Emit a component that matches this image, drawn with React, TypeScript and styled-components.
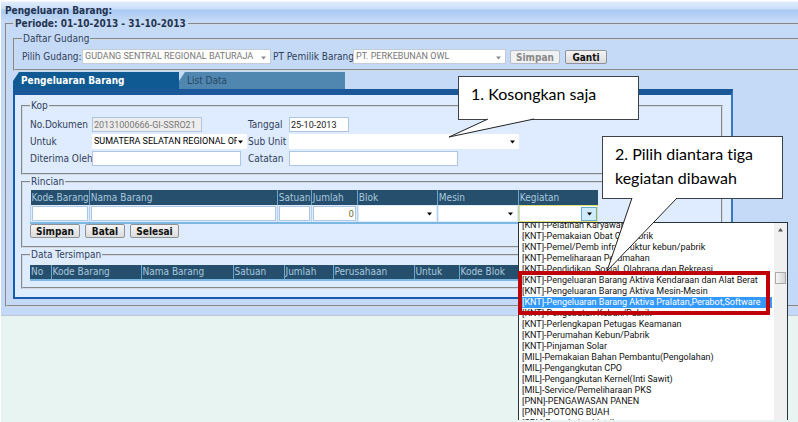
import React from "react";
import styled, { createGlobalStyle, css } from "styled-components";

const ui = `"DejaVu Sans Condensed", "DejaVu Sans", sans-serif`;
const field = `Roboto, "Liberation Sans", Arial, sans-serif`;

const GlobalStyle = createGlobalStyle`
  * { box-sizing: border-box; }
  body { margin: 0; background: #e7f4f2; font: 10px/12px ${ui}; color: #30415a; overflow: hidden; }
  button, input, select { font: inherit; margin: 0; }
`;

const Page = styled.main`
  position: relative;
  min-height: 100vh;
  border-left: 1px solid #fff;
  overflow: hidden;
`;

const Window = styled.section`
  display: flow-root;
  padding: 4px 0 8px 4px;
  background: linear-gradient(#fff 0 1px, #dfecfd 2px, #c8def9 9px, #a9c9f3 10px, #c5daf7 21px, #c3d9f7 100%);
  border-bottom: 1px solid #b9c8d8;
`;

const Title = styled.h1`
  margin: 0;
  height: 13px;
  font: bold 10px/13px ${ui};
  color: #24344f;
`;

const Group = styled.fieldset<{ $open?: boolean; $top?: number; $bottom?: number }>`
  min-width: 0;
  margin: 0;
  padding: ${(p) => p.$top ?? 5}px 7px ${(p) => p.$bottom ?? 7}px;
  border: 2px groove #d3d9e0;
  ${(p) => p.$open && "border-right: 0; padding-right: 0;"}
  legend {
    padding: 0 1px;
    height: 12px;
    font-size: 10px;
    line-height: 12px;
  }
`;

const Period = styled(Group)`
  padding-left: 6px;
  & > legend {
    height: 14px;
    padding: 0 2px;
    font: bold 10px/14px ${ui};
    color: #24344f;
  }
`;

const Bar = styled.div`
  display: flex;
  align-items: center;
  height: 17px;
  white-space: nowrap;
`;

const Label = styled.label<{ $w?: number; $pad?: boolean }>`
  flex: none;
  ${(p) => p.$w && `width: ${p.$w}px;`}
  ${(p) => p.$pad && "padding-left: 2px;"}
  white-space: nowrap;
`;

const Drop = styled.span<{ $w?: number; $off?: boolean; $focus?: boolean }>`
  position: relative;
  display: flex;
  flex: none;
  width: ${(p) => (p.$w ? `${p.$w}px` : "100%")};
  height: 15px;
  background: #fff;
  ${(p) => p.$off && "border: 1px solid #c4ccd4;"}
  select {
    appearance: none;
    flex: 1;
    min-width: 0;
    padding: 0 10px 0 2px;
    border: 0;
    background: transparent;
    font: 9px/13px ${field};
    color: ${(p) => (p.$off ? "#777" : "#000")};
    opacity: 1;
    overflow: hidden;
  }
  svg {
    position: absolute;
    right: 4px;
    top: 6px;
    width: 5px;
    height: 4px;
    fill: ${(p) => (p.$off ? "#8a8a8a" : "#000")};
    pointer-events: none;
  }
  ${(p) =>
    p.$focus &&
    css`
      outline: 1px solid #e3e27a;
      &::after {
        content: "";
        position: absolute;
        inset: 1px 0 0 auto;
        width: 14px;
        border: 1px solid #6aa9d0;
        background: #cfeafa;
      }
      svg { z-index: 1; right: 5px; }
    `}
`;

const Text = styled.input<{ $w?: number; $num?: boolean }>`
  flex: none;
  width: ${(p) => (p.$w ? `${p.$w}px` : "100%")};
  height: 15px;
  padding: 0 1px;
  border: 1px solid #adc6e4;
  background: #fff;
  font: 9px/13px ${field};
  color: #222;
  ${(p) => p.$num && "text-align: right; color: #6f6a20;"}
  &:disabled { background: #ededed; color: #777; }
`;

const Button = styled.button<{ $w: number }>`
  width: ${(p) => p.$w}px;
  height: 14px;
  padding: 0;
  border: 1px solid #8f9296;
  border-radius: 2px;
  background: linear-gradient(#f4f4f4, #dcdcdc);
  font: bold 10px/14px ${ui};
  color: #111;
  &:disabled { color: #888; border-color: #b5bcc4; background: #eff1f3; }
`;

const Tabs = styled.nav`
  display: flex;
  margin-top: 1px;
`;

const Tab = styled.button<{ $active?: boolean }>`
  width: 166px;
  height: 17px;
  padding: 0 8px;
  border: 0;
  clip-path: polygon(6px 0, 100% 0, 100% 100%, 0 100%, 0 9px);
  text-align: left;
  background: ${(p) => (p.$active ? "#0f5a93" : "#4f87b0")};
  color: ${(p) => (p.$active ? "#fff" : "#29465f")};
  font: ${(p) => (p.$active ? "bold" : "normal")} 10px/17px ${ui};
`;

const Sheet = styled.div`
  display: flex;
  flex-direction: column;
  gap: 1px;
  margin-right: 65px;
  padding: 5px 8px 8px 6px;
  border: 2px solid #3478c0;
  border-top: 6px solid #1b5899;
  border-left-color: #195aaa;
  border-bottom-color: #195aaa;
  background: #dfebff;
`;

const FormGrid = styled.div`
  display: grid;
  grid-template-columns: 62px 156px 41px 1fr;
  row-gap: 2px;
  align-items: center;
`;

const Grid = styled.table`
  border-collapse: collapse;
  border-bottom: 2px solid #7db8e2;
  th {
    height: 15px;
    padding: 0 0 0 1px;
    border-left: 1px solid #6da5cb;
    background: #264f6d;
    color: #a9c9df;
    font-weight: normal;
    text-align: left;
    white-space: nowrap;
  }
  th:first-child { border-left: 0; }
  td {
    height: 17px;
    padding: 1px;
    background: #dfebff;
    border-left: 1px solid #b4d2ee;
  }
`;

const Buttons = styled.div`
  display: flex;
  gap: 5px;
`;

const BarButtons = styled(Buttons)`
  margin-left: 4px;
`;

const List = styled.div`
  position: absolute;
  left: 517px;
  top: 222px;
  bottom: 2px;
  width: 270px;
  display: flex;
  border: 1px solid #26343c;
  border-bottom: 0;
  background: #fff;
  overflow: hidden;
`;

const Options = styled.ul`
  flex: 1;
  min-width: 0;
  margin: -3px 2px 0;
  padding: 0;
  list-style: none;
`;

const Option = styled.li<{ $on?: boolean }>`
  height: 11px;
  padding-left: 1px;
  font: 9px/11px ${field};
  white-space: nowrap;
  color: ${(p) => (p.$on ? "#fff" : "#111")};
  background: ${(p) => (p.$on ? "#3399ff" : "transparent")};
`;

const Scroll = styled.div`
  display: flex;
  flex: none;
  flex-direction: column;
  align-items: center;
  width: 13px;
  padding-top: 5px;
  background: #f0f0f0;
  svg { width: 5px; height: 4px; fill: #555; }
`;

const Thumb = styled.span`
  width: 11px;
  height: 12px;
  margin-top: 40px;
  border: 1px solid #aaa;
  background: linear-gradient(90deg, #f7f7f7, #d4d4d4);
`;

const Mark = styled.div`
  position: absolute;
  left: 517px;
  top: 271px;
  width: 252px;
  height: 44px;
  border: 4px solid #bf0007;
`;

const Tails = styled.svg`
  position: absolute;
  left: 0;
  top: 0;
  z-index: 2;
  width: 798px;
  height: 422px;
  pointer-events: none;
`;

const Note = styled.p<{ $x: number; $y: number; $h: number }>`
  position: absolute;
  left: ${(p) => p.$x}px;
  top: ${(p) => p.$y}px;
  z-index: 1;
  width: 181px;
  height: ${(p) => p.$h}px;
  margin: 0;
  padding: 5px 12px;
  border: 1px solid #3d4248;
  background: #fff;
  color: #000;
  font: 16px/24px Lato, sans-serif;
  font-variant-ligatures: none;
`;

const Arrow = ({ up }: { up?: boolean }) => (
  <svg viewBox="0 0 5 4" aria-hidden="true">
    <path d={up ? "M0 3.5h5L2.5 0z" : "M0 .5h5L2.5 3.5z"} />
  </svg>
);

type PickProps = { id?: string; label?: string; w?: number; off?: boolean; focus?: boolean; value?: string };
const Pick = ({ id, label, w, off, focus, value = "" }: PickProps) => (
  <Drop $w={w} $off={off} $focus={focus}>
    <select id={id} aria-label={label} disabled={off}>
      <option>{value}</option>
    </select>
    <Arrow />
  </Drop>
);

const entry: [string, number][] = [
  ["Kode.Barang", 56], ["Nama Barang", 188], ["Satuan", 34], ["Jumlah", 46],
  ["Blok", 80], ["Mesin", 81], ["Kegiatan", 80],
];
const saved: [string, number][] = [
  ["No", 21], ["Kode Barang", 90], ["Nama Barang", 92], ["Satuan", 51], ["Jumlah", 49],
  ["Perusahaan", 81], ["Untuk", 45], ["Kode Blok", 139],
];
const options = [
  "[KNT]-Pelatihan Karyawan",
  "[KNT]-Pemakaian Obat Oli Pabrik",
  "[KNT]-Pemel/Pemb infrastruktur kebun/pabrik",
  "[KNT]-Pemeliharaan Perumahan",
  "[KNT]-Pendidikan, Sosial, Olahraga dan Rekreasi",
  "[KNT]-Pengeluaran Barang Aktiva Kendaraan dan Alat Berat",
  "[KNT]-Pengeluaran Barang Aktiva Mesin-Mesin",
  "[KNT]-Pengeluaran Barang Aktiva Pralatan,Perabot,Software",
  "[KNT]-Pengobatan Kebun/Pabrik",
  "[KNT]-Perlengkapan Petugas Keamanan",
  "[KNT]-Perumahan Kebun/Pabrik",
  "[KNT]-Pinjaman Solar",
  "[MIL]-Pemakaian Bahan Pembantu(Pengolahan)",
  "[MIL]-Pengangkutan CPO",
  "[MIL]-Pengangkutan Kernel(Inti Sawit)",
  "[MIL]-Service/Pemeliharaan PKS",
  "[PNN]-PENGAWASAN PANEN",
  "[PNN]-POTONG BUAH",
  "[SPL]-Pemakaian Listrik",
];

const Head = ({ cols }: { cols: [string, number][] }) => (
  <>
    <colgroup>{cols.map(([n, w]) => <col key={n} width={w} />)}</colgroup>
    <thead><tr>{cols.map(([n]) => <th key={n} scope="col">{n}</th>)}</tr></thead>
  </>
);

export default function App() {
  return (
    <Page>
      <GlobalStyle />
      <Window>
        <Title>Pengeluaran Barang:</Title>
        <Period $open $top={2} $bottom={6}>
          <legend>Periode: 01-10-2013 - 31-10-2013</legend>
          <Group $open $top={3} $bottom={4}>
            <legend>Daftar Gudang</legend>
            <Bar>
              <Label htmlFor="gudang" $w={60}>Pilih Gudang:</Label>
              <Pick id="gudang" w={189} off value="GUDANG SENTRAL REGIONAL BATURAJA" />
              <Label htmlFor="pt" $w={82} $pad>PT Pemilik Barang</Label>
              <Pick id="pt" w={153} off value="PT. PERKEBUNAN OWL" />
              <BarButtons>
                <Button $w={50} disabled>Simpan</Button>
                <Button $w={42}>Ganti</Button>
              </BarButtons>
            </Bar>
          </Group>
          <Tabs>
            <Tab $active>Pengeluaran Barang</Tab>
            <Tab>List Data</Tab>
          </Tabs>
          <Sheet>
            <Group $top={5} $bottom={7}>
              <legend>Kop</legend>
              <FormGrid>
                <Label htmlFor="no">No.Dokumen</Label>
                <Text id="no" $w={110} disabled defaultValue="20131000666-GI-SSRO21" />
                <Label htmlFor="tgl">Tanggal</Label>
                <Text id="tgl" $w={60} defaultValue="25-10-2013" />
                <Label htmlFor="untuk">Untuk</Label>
                <Pick id="untuk" w={155} value="SUMATERA SELATAN REGIONAL OFFICE" />
                <Label htmlFor="sub">Sub Unit</Label>
                <Pick id="sub" w={230} />
                <Label htmlFor="oleh">Diterima Oleh</Label>
                <Text id="oleh" $w={149} />
                <Label htmlFor="cat">Catatan</Label>
                <Text id="cat" $w={169} />
              </FormGrid>
            </Group>
            <Group $top={2} $bottom={8}>
              <legend>Rincian</legend>
              <Grid>
                <Head cols={entry} />
                <tbody>
                  <tr>
                    <td><Text aria-label="Kode.Barang" /></td>
                    <td><Text aria-label="Nama Barang" /></td>
                    <td><Text aria-label="Satuan" /></td>
                    <td><Text aria-label="Jumlah" $num defaultValue="0" /></td>
                    <td><Pick label="Blok" /></td>
                    <td><Pick label="Mesin" /></td>
                    <td><Pick label="Kegiatan" focus /></td>
                  </tr>
                </tbody>
              </Grid>
              <Buttons>
                <Button $w={50}>Simpan</Button>
                <Button $w={40}>Batal</Button>
                <Button $w={49}>Selesai</Button>
              </Buttons>
            </Group>
            <Group $top={4} $bottom={6}>
              <legend>Data Tersimpan</legend>
              <Grid><Head cols={saved} /></Grid>
            </Group>
          </Sheet>
        </Period>
      </Window>

      <List>
        <Options>
          {options.map((o, i) => <Option key={o} $on={i === 7}>{o}</Option>)}
        </Options>
        <Scroll><Arrow up /><Thumb /></Scroll>
      </List>
      <Mark />
      <Note $x={457} $y={76} $h={44}>1. Kosongkan saja</Note>
      <Note $x={601} $y={136} $h={63}>2. Pilih diantara tiga kegiatan dibawah</Note>
      <Tails viewBox="0 0 798 422" fill="#fff" stroke="#222">
        <path d="M487 119L448 137L533 119" />
        <path d="M631 198L606 271L676 198" />
      </Tails>
    </Page>
  );
}
